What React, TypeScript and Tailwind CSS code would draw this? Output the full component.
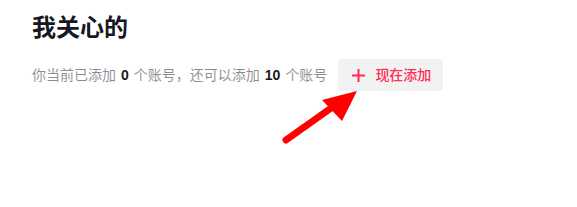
import React from 'react';

export default function App() {
  return (
    <div className="relative w-[577px] h-[207px] bg-white" style={{ fontFamily: '"Liberation Sans", "Noto Sans CJK SC", sans-serif' }}>
      <div className="pl-[32px] pt-[11px]">
        <h1 className="text-[24px] leading-[34px] font-bold text-[#161823]">我关心的</h1>
        <div className="mt-[14px] flex items-center">
          <span className="text-[14px] text-[rgba(22,24,35,0.5)]">
            你当前已添加
            <b className="mx-[5px] font-bold text-[#161823]">0</b>
            个账号，还可以添加
            <b className="mx-[5px] font-bold text-[#161823]">10</b>
            个账号
          </span>
          <button className="ml-[11px] h-[32px] pl-[14px] pr-[12px] flex items-center gap-[10px] rounded-[4px] bg-[#f2f2f3] text-[14px] font-medium text-[#fe2c55]">
            <svg width="13" height="13" viewBox="0 0 13 13">
              <path d="M6.5 0v13M0 6.5h13" stroke="#fe2c55" strokeWidth="2" />
            </svg>
            现在添加
          </button>
        </div>
      </div>
      <svg className="absolute left-0 top-0 pointer-events-none" width="577" height="207">
        <line x1="286" y1="140" x2="334" y2="106" stroke="#ff0000" strokeWidth="7" strokeLinecap="round" />
        <polygon points="357,91 322,100 342,121" fill="#ff0000" />
      </svg>
    </div>
  );
}
